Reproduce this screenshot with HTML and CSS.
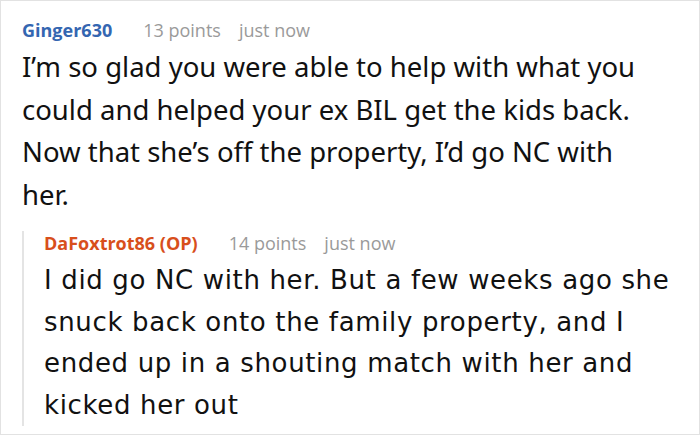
FILE: index.html
```html
<!DOCTYPE html>
<html>
<head>
<meta charset="utf-8">
<link rel="stylesheet" href="styles.css">
</head>
<body>
<div class="frame">
  <div class="comment">
    <div class="meta">
      <span class="author author-blue">Ginger630</span>
      <span class="info">13 points</span>
      <span class="info">just now</span>
    </div>
    <p class="body body-main">I’m so glad you were able to help with what you could and helped your ex BIL get the kids back. Now that she’s off the property, I’d go NC with her.</p>
  </div>
  <div class="reply">
    <div class="meta">
      <span class="author author-orange">DaFoxtrot86 (OP)</span>
      <span class="info">14 points</span>
      <span class="info">just now</span>
    </div>
    <p class="body body-reply">I did go NC with her. But a few weeks ago she snuck back onto the family property, and I ended up in a shouting match with her and kicked her out</p>
  </div>
</div>
</body>
</html>
```
FILE: styles.css
```css
html, body {
  margin: 0;
  padding: 0;
  background: #ffffff;
}
body {
  width: 700px;
  height: 436px;
  overflow: hidden;
  font-family: "Open Sans", "Noto Sans", sans-serif;
  color: #111111;
}
.frame {
  box-sizing: border-box;
  width: 700px;
  height: 435px;
  border: 1px solid #e2e2e2;
  padding: 17px 18px 0 21px;
}
.meta {
  display: flex;
  align-items: baseline;
  font-size: 18px;
  line-height: 24px;
}
.author {
  font-weight: 700;
  margin-right: 31px;
}
.author-blue { color: #3466b1; }
.author-orange { color: #d84f1c; }
.info {
  color: #9a9a9a;
  margin-right: 18px;
}
.body {
  margin: 0;
}
.body-main {
  font-family: "Noto Sans", sans-serif;
  font-size: 27.5px;
  line-height: 42.5px;
  margin-top: 4px;
  margin-right: 37px;
}
.reply {
  margin-top: 27px;
  padding-left: 20px;
  border-left: 2px solid #e4e4e4;
}
.reply .meta {
  margin-top: -12px;
}
.body-reply {
  font-family: "DejaVu Sans", sans-serif;
  font-size: 26px;
  letter-spacing: 0.65px;
  line-height: 41.5px;
  margin-top: 5px;
  margin-bottom: -8px;
}
```
